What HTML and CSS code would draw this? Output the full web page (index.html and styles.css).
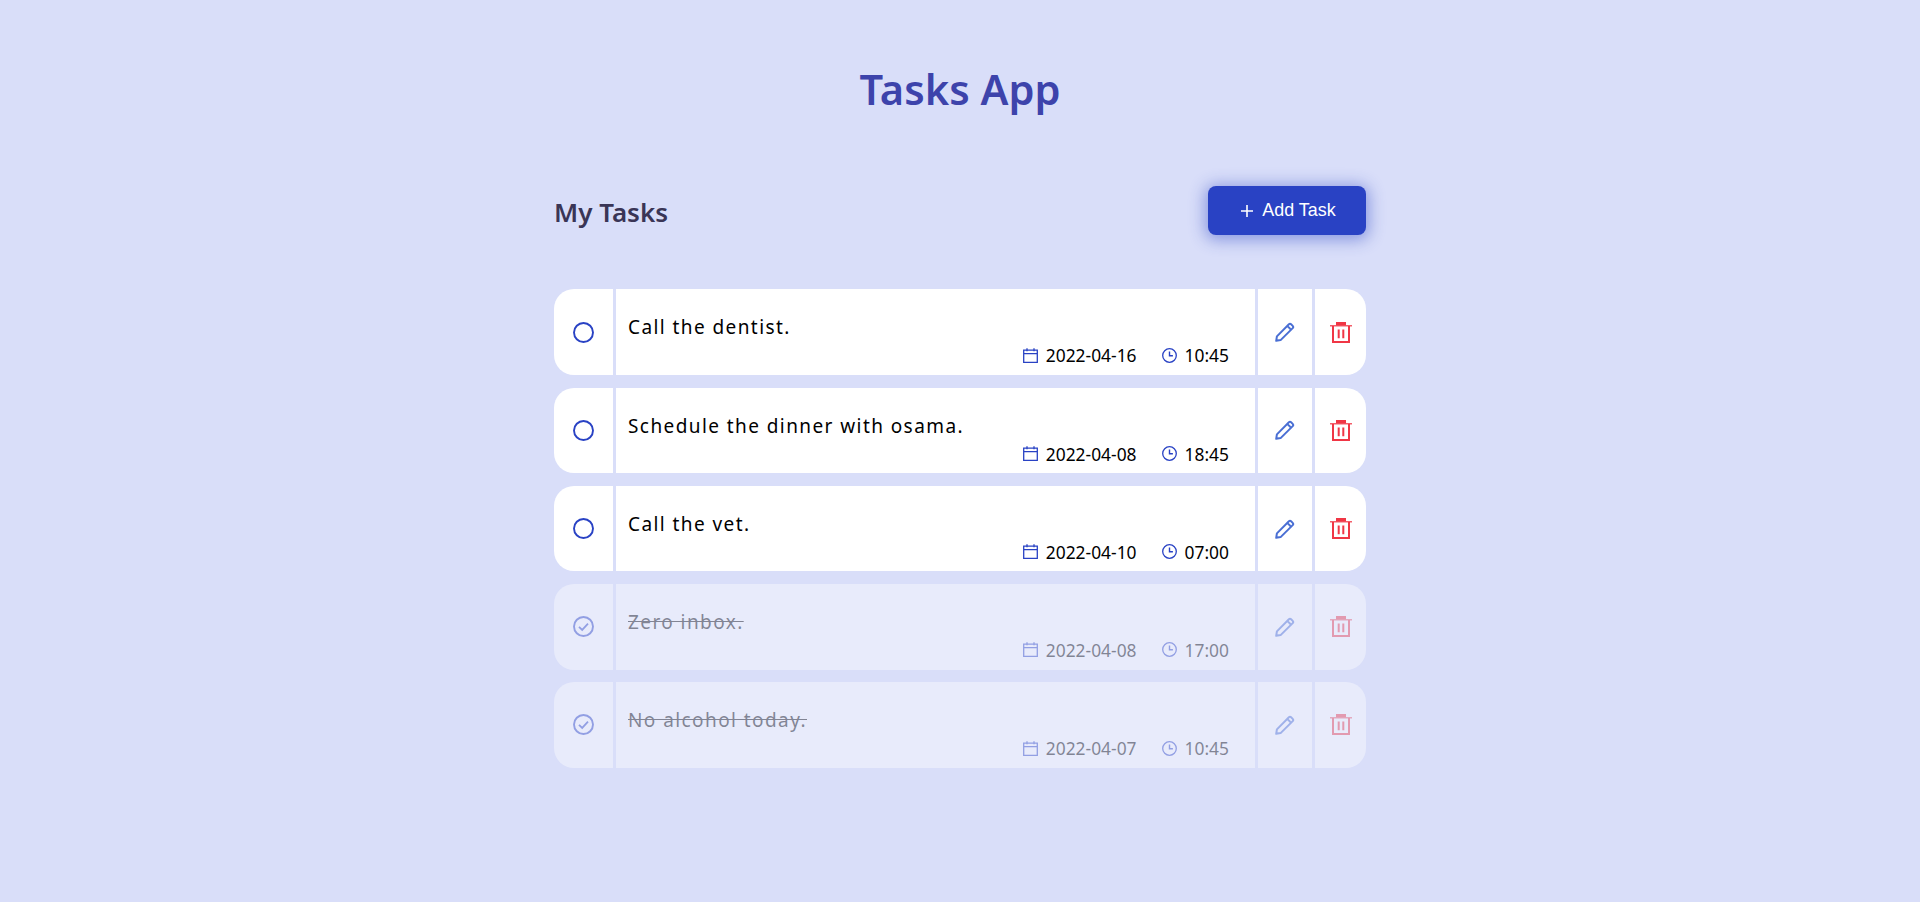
FILE: index.html
```html
<!DOCTYPE html>
<html lang="en">
<head>
<meta charset="utf-8">
<title>Tasks App</title>
<link rel="stylesheet" href="styles.css">
</head>
<body>
<svg class="defs" width="0" height="0" aria-hidden="true">
  <symbol id="i-plus" viewBox="0 0 12 12"><path d="M6 0v12M0 6h12" fill="none" stroke="currentColor" stroke-width="1.6"/></symbol>
  <symbol id="i-circle" viewBox="0 0 21 21"><circle cx="10.5" cy="10.5" r="9.5" fill="none" stroke="currentColor" stroke-width="1.9"/></symbol>
  <symbol id="i-check" viewBox="0 0 21 21"><circle cx="10.5" cy="10.5" r="9.5" fill="none" stroke="currentColor" stroke-width="1.9"/><path d="M6 10.8l3.2 3.1 5.8-6.2" fill="none" stroke="currentColor" stroke-width="1.8"/></symbol>
  <symbol id="i-cal" viewBox="0 0 15 15"><path d="M.7 2.2h13.6v12.1H.7zM.7 5.6h13.6M4 .3v3M11 .3v3" fill="none" stroke="currentColor" stroke-width="1.3"/></symbol>
  <symbol id="i-clock" viewBox="0 0 15 15"><circle cx="7.5" cy="7.5" r="6.8" fill="none" stroke="currentColor" stroke-width="1.3"/><path d="M7.5 3.6v4.2h3.4" fill="none" stroke="currentColor" stroke-width="1.4"/></symbol>
  <symbol id="i-edit" viewBox="0 0 20 20"><path d="M1.2 18.8l.7-4.4L13.9 2.3a1.6 1.6 0 0 1 2.2 0l1.6 1.6a1.6 1.6 0 0 1 0 2.2L5.6 18.1zM13 4.6l2.4 2.4" fill="none" stroke="currentColor" stroke-width="2" stroke-linejoin="round"/></symbol>
  <symbol id="i-trash" viewBox="0 0 22 21"><path d="M0 3.8h22" stroke="currentColor" stroke-width="1.2"/><path d="M6 0h10v3.4H6z" fill="currentColor"/><path d="M3 4v16h16V4" fill="none" stroke="currentColor" stroke-width="2"/><path d="M8.7 7.5v8.8M13.3 7.5v8.8" fill="none" stroke="currentColor" stroke-width="2"/></symbol>
</svg>
<main class="app">
  <h1 class="title">Tasks App</h1>
  <header class="head">
    <h2 class="subtitle">My Tasks</h2>
    <button class="add"><svg class="ico-plus"><use href="#i-plus"/></svg>Add Task</button>
  </header>
  <ul class="list">
    <li class="task">
      <div class="cell status"><svg class="ico-status"><use href="#i-circle"/></svg></div>
      <div class="cell body">
        <p class="name">Call the dentist.</p>
        <div class="meta"><span class="stamp"><svg class="ico-meta"><use href="#i-cal"/></svg>2022-04-16</span><span class="stamp"><svg class="ico-meta"><use href="#i-clock"/></svg>10:45</span></div>
      </div>
      <div class="cell edit"><svg class="ico-edit"><use href="#i-edit"/></svg></div>
      <div class="cell del"><svg class="ico-del"><use href="#i-trash"/></svg></div>
    </li>
    <li class="task">
      <div class="cell status"><svg class="ico-status"><use href="#i-circle"/></svg></div>
      <div class="cell body">
        <p class="name">Schedule the dinner with osama.</p>
        <div class="meta"><span class="stamp"><svg class="ico-meta"><use href="#i-cal"/></svg>2022-04-08</span><span class="stamp"><svg class="ico-meta"><use href="#i-clock"/></svg>18:45</span></div>
      </div>
      <div class="cell edit"><svg class="ico-edit"><use href="#i-edit"/></svg></div>
      <div class="cell del"><svg class="ico-del"><use href="#i-trash"/></svg></div>
    </li>
    <li class="task">
      <div class="cell status"><svg class="ico-status"><use href="#i-circle"/></svg></div>
      <div class="cell body">
        <p class="name">Call the vet.</p>
        <div class="meta"><span class="stamp"><svg class="ico-meta"><use href="#i-cal"/></svg>2022-04-10</span><span class="stamp"><svg class="ico-meta"><use href="#i-clock"/></svg>07:00</span></div>
      </div>
      <div class="cell edit"><svg class="ico-edit"><use href="#i-edit"/></svg></div>
      <div class="cell del"><svg class="ico-del"><use href="#i-trash"/></svg></div>
    </li>
    <li class="task done">
      <div class="cell status"><svg class="ico-status"><use href="#i-check"/></svg></div>
      <div class="cell body">
        <p class="name">Zero inbox.</p>
        <div class="meta"><span class="stamp"><svg class="ico-meta"><use href="#i-cal"/></svg>2022-04-08</span><span class="stamp"><svg class="ico-meta"><use href="#i-clock"/></svg>17:00</span></div>
      </div>
      <div class="cell edit"><svg class="ico-edit"><use href="#i-edit"/></svg></div>
      <div class="cell del"><svg class="ico-del"><use href="#i-trash"/></svg></div>
    </li>
    <li class="task done">
      <div class="cell status"><svg class="ico-status"><use href="#i-check"/></svg></div>
      <div class="cell body">
        <p class="name">No alcohol today.</p>
        <div class="meta"><span class="stamp"><svg class="ico-meta"><use href="#i-cal"/></svg>2022-04-07</span><span class="stamp"><svg class="ico-meta"><use href="#i-clock"/></svg>10:45</span></div>
      </div>
      <div class="cell edit"><svg class="ico-edit"><use href="#i-edit"/></svg></div>
      <div class="cell del"><svg class="ico-del"><use href="#i-trash"/></svg></div>
    </li>
  </ul>
</main>
</body>
</html>
```
FILE: styles.css
```css
* { box-sizing: border-box; }
html, body { margin: 0; height: 100%; }
body {
  background: #d9def9;
  font-family: "Noto Sans", "Open Sans", sans-serif;
  color: #000;
  overflow: hidden;
}
.defs { position: absolute; }
.app {
  width: 812px;
  margin: 0 auto;
  padding-top: 62px;
}
.title {
  margin: 0;
  text-align: center;
  font-size: 41.6px;
  line-height: 54px;
  font-weight: 600;
  color: #3d43ab;
}
.head {
  margin-top: 70px;
  display: flex;
  justify-content: space-between;
  align-items: center;
  height: 49px;
}
.subtitle {
  margin: 0;
  font-size: 26px;
  line-height: 36px;
  font-weight: 600;
  color: #3a3556;
  position: relative;
  top: 1px;
}
.add {
  width: 158px;
  height: 49px;
  border: 0;
  border-radius: 8px;
  background: #2942c4;
  color: #fff;
  font-family: "Liberation Sans", Arial, sans-serif;
  font-size: 17.9px;
  box-shadow: 0 2px 16px 3px rgba(41, 66, 196, .45);
  display: flex;
  align-items: center;
  justify-content: center;
  gap: 9px;
  padding: 0 0 0 3px;
}
.ico-plus { width: 12px; height: 12px; flex: none; }
.list {
  list-style: none;
  margin: 54.4px 0 0;
  padding: 0;
  display: flex;
  flex-direction: column;
  gap: 12.6px;
}
.task {
  display: grid;
  grid-template-columns: 59px 1fr 54px 51px;
  column-gap: 3px;
  height: 85.6px;
}
.cell { background: #fff; display: flex; align-items: center; justify-content: center; }
.status { border-radius: 20px 0 0 20px; color: #2942c4; }
.del { border-radius: 0 20px 20px 0; color: #f03645; }
.edit { color: #4a6fd4; }
.done .cell { opacity: .4; }
.ico-status { width: 21px; height: 21px; }
.ico-edit { width: 20px; height: 20px; }
.ico-del { width: 22px; height: 21px; }
.ico-meta { width: 15px; height: 15px; color: #2942c4; margin-right: 8px; flex: none; }
.body {
  display: block;
  padding: 25px 26px 0 12px;
}
.name {
  margin: 0;
  font-size: 19px;
  line-height: 26px;
  letter-spacing: 1.42px;
}
.done .name { text-decoration: line-through; }
.meta {
  margin-top: 4px;
  display: flex;
  justify-content: flex-end;
  gap: 25px;
  font-size: 17.4px;
  line-height: 22px;
}
.stamp { display: flex; align-items: center; }
```
